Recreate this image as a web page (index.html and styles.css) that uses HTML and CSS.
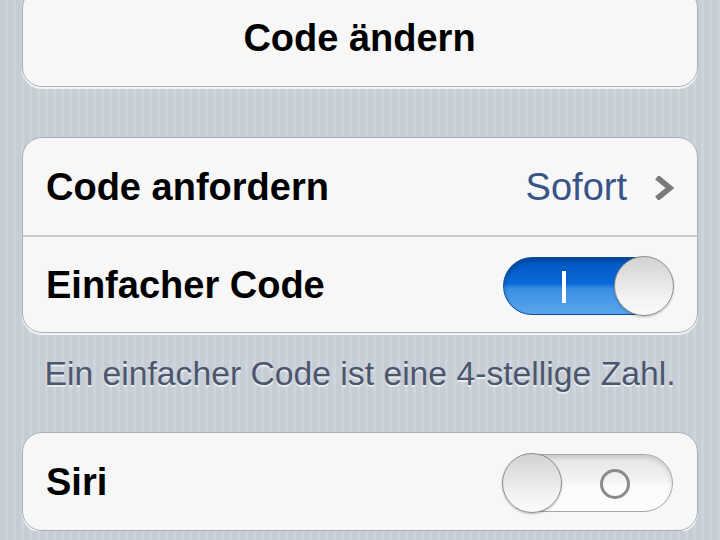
FILE: index.html
```html
<!DOCTYPE html>
<html lang="de">
<head>
  <meta charset="UTF-8">
  <title>Code-Sperre</title>
  <link rel="stylesheet" href="styles.css">
</head>
<body>

  <div class="settings">

    <div class="group first">
      <div class="row center">Code ändern</div>
    </div>

    <div class="group">
      <div class="row">
        <span class="label">Code anfordern</span>
        <span class="detail">
          Sofort
          <svg class="chevron" width="20" height="24" viewBox="0 0 20 24">
            <path d="M4 3 L15 12 L4 21" fill="none" stroke="#7a7a7a" stroke-width="5.5" stroke-linecap="square" stroke-linejoin="miter"/>
          </svg>
        </span>
      </div>
      <div class="row divided">
        <span class="label">Einfacher Code</span>
        <div class="switch on">
          <span class="mark-i"></span>
          <span class="knob"></span>
        </div>
      </div>
    </div>

    <p class="footer">Ein einfacher Code ist eine 4-stellige Zahl.</p>

    <div class="group">
      <div class="row">
        <span class="label">Siri</span>
        <div class="switch off">
          <span class="knob"></span>
          <span class="mark-o"></span>
        </div>
      </div>
    </div>

  </div>

</body>
</html>
```

FILE: styles.css
```css
body {
  margin: 0;
  font-family: "Liberation Sans", Arial, Helvetica, sans-serif;
  background-color: #c8cfd7;
  background-image: repeating-linear-gradient(90deg,
    #c6cdd5 0px, #c6cdd5 5px,
    #ced4db 5px, #ced4db 8px);
  color: #000;
}

.settings {
  padding: 0 22px;
}

/* grouped table sections */
.group {
  background: #f7f7f7;
  border: 1px solid #a9b0b8;
  border-radius: 20px;
  box-shadow: 0 2px 0 rgba(255, 255, 255, 0.75);
  margin-bottom: 50px;
}

.group.first {
  margin-top: -12px;
}

.group:last-child {
  margin-bottom: 0;
}

.row {
  box-sizing: border-box;
  height: 97px;
  display: flex;
  align-items: center;
  justify-content: space-between;
  padding: 2px 24px 0 23px;
  font-size: 38px;
  font-weight: bold;
}

.row.center {
  justify-content: center;
}

.row.divided {
  border-top: 2px solid #cdcdcd;
}

.detail {
  display: flex;
  align-items: center;
  gap: 28px;
  font-weight: normal;
  color: #385487;
}

.chevron {
  margin-right: -2px;
}

/* on/off switches */
.switch {
  position: relative;
  width: 170px;
  height: 58px;
  border-radius: 30px;
  box-sizing: border-box;
}

.switch.on {
  border: 1px solid #0a4f9e;
  background: linear-gradient(#0057c4 0%, #0868d6 45%, #3a8fe4 55%, #5aa6ec 100%);
  box-shadow: inset 0 3px 4px rgba(0, 0, 0, 0.25);
}

.switch.off {
  border: 1px solid #a7a7a7;
  background: linear-gradient(#e4e4e4 0%, #f3f3f3 45%, #fbfbfb 55%, #fdfdfd 100%);
  box-shadow: inset 0 3px 4px rgba(0, 0, 0, 0.12);
}

.knob {
  position: absolute;
  top: -2px;
  width: 60px;
  height: 60px;
  border-radius: 50%;
  box-sizing: border-box;
  border: 1px solid #8d8d8d;
  background: linear-gradient(#d2d2d2, #f2f2f2 70%, #fafafa);
  box-shadow: 0 1px 2px rgba(0, 0, 0, 0.25);
}

.switch.on .knob {
  right: -2px;
}

.switch.off .knob {
  left: -2px;
}

.mark-i {
  position: absolute;
  left: 58px;
  top: 13px;
  width: 4px;
  height: 32px;
  background: #fff;
  box-shadow: 0 -1px 1px rgba(0, 0, 0, 0.3);
}

.mark-o {
  position: absolute;
  left: 96px;
  top: 14px;
  width: 24px;
  height: 24px;
  border: 3px solid #8a8a8a;
  border-radius: 50%;
}

.footer {
  margin: -50px 0 0;
  padding: 20px 0 39px;
  line-height: 40px;
  font-size: 33.7px;
  color: #4c566c;
  text-align: center;
  text-shadow: 0 2px 0 rgba(255, 255, 255, 0.6);
}
```
